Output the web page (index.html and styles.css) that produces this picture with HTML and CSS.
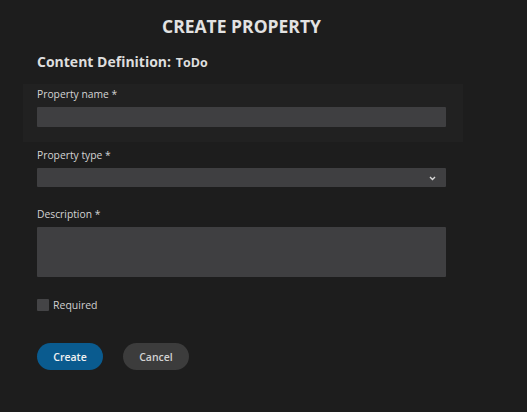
FILE: index.html
```html
<!DOCTYPE html>
<html>
<head>
<meta charset="utf-8">
<link rel="stylesheet" href="styles.css">
</head>
<body>
<div class="dialog">
  <h1 class="title">CREATE PROPERTY</h1>
  <h2 class="subtitle">Content Definition: <span class="cd-name">ToDo</span></h2>
  <div class="panel">
    <label class="label">Property name *</label>
    <div class="input"></div>
  </div>
  <label class="label label-type">Property type *</label>
  <div class="input select">
    <svg class="chev" width="7" height="5" viewBox="0 0 7 5"><path d="M1 1 L3.5 3.5 L6 1" fill="none" stroke="#d8d8d8" stroke-width="1.4"/></svg>
  </div>
  <label class="label label-desc">Description *</label>
  <div class="input textarea"></div>
  <div class="check-row">
    <span class="checkbox"></span>
    <span class="check-label">Required</span>
  </div>
  <div class="actions">
    <button class="btn btn-primary">Create</button>
    <button class="btn btn-secondary">Cancel</button>
  </div>
</div>
</body>
</html>
```
FILE: styles.css
```css
html, body {
  margin: 0;
  padding: 0;
  background: #1d1d1d;
  height: 100%;
}
body {
  font-family: "Open Sans", "DejaVu Sans", sans-serif;
  color: #d6d6d6;
}
.dialog {
  width: 409px;
  padding: 0 37px;
  display: flex;
  flex-direction: column;
}
.title {
  margin: 14px 0 0;
  font-size: 17.5px;
  line-height: 24px;
  font-weight: 700;
  text-align: center;
  color: #e2e2e2;
}
.subtitle {
  margin: 14px 0 0;
  font-size: 14px;
  line-height: 20px;
  font-weight: 700;
  color: #dedede;
}
.cd-name {
  font-size: 12.5px;
  margin-left: 1px;
}
.panel {
  margin: 11px -17px 0 -14px;
  padding: 3px 17px 15px 14px;
  background: #212121;
  display: flex;
  flex-direction: column;
}
.label {
  display: block;
  font-size: 10.3px;
  line-height: 14px;
  color: #d4d4d4;
  margin-bottom: 6px;
}
.label-type { margin-top: 6px; }
.label-desc { margin-top: 20px; }
.input {
  height: 20px;
  background: #3f3f41;
  border-radius: 1px;
  position: relative;
}
.select { height: 19px; }
.chev {
  position: absolute;
  right: 10px;
  top: 8px;
}
.textarea { height: 50px; }
.check-row {
  margin-top: 21px;
  display: flex;
  align-items: center;
  gap: 4px;
}
.checkbox {
  width: 12px;
  height: 12px;
  background: #444446;
  border-radius: 1px;
}
.check-label {
  font-size: 10.5px;
  line-height: 14px;
  color: #d0d0d0;
}
.actions {
  margin-top: 31px;
  display: flex;
  gap: 20px;
}
.btn {
  width: 66px;
  height: 27px;
  border: none;
  border-radius: 14px;
  font-family: "Open Sans", "DejaVu Sans", sans-serif;
  font-size: 10.5px;
  font-weight: 600;
  padding: 0;
}
.btn-primary {
  background: #0a5b8f;
  color: #f2f2f2;
}
.btn-secondary {
  background: #3c3c3c;
  color: #d2d2d2;
}
```
